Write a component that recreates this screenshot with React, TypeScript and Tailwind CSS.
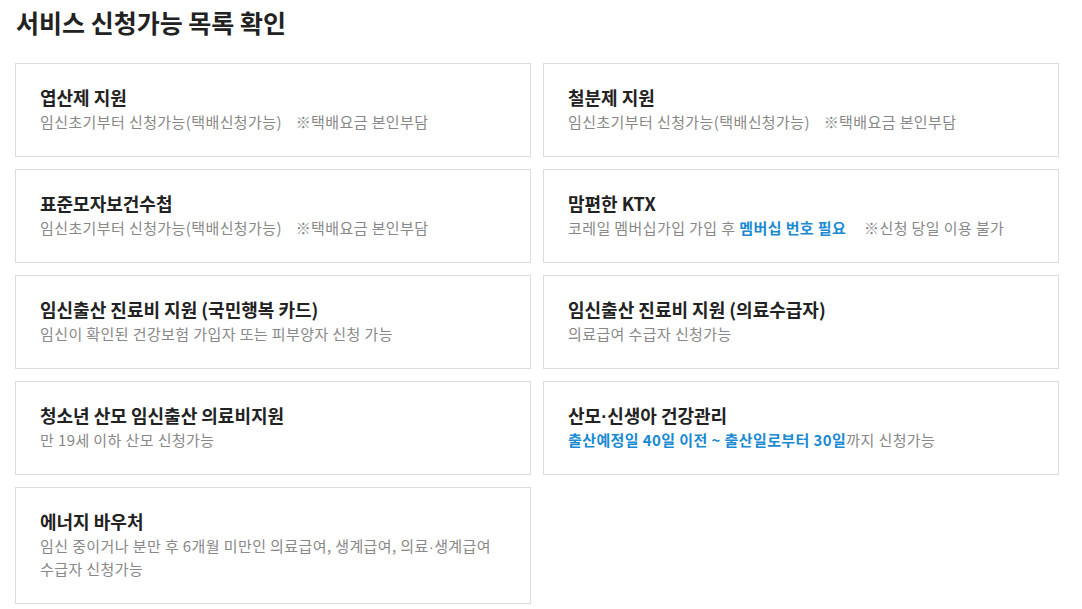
import React from "react";

type Item = {
  title: string;
  desc: React.ReactNode;
};

const B = ({ children }: { children: React.ReactNode }) => (
  <strong className="font-bold text-[#1a8ad4]">{children}</strong>
);

// narrow middle dot (CJK font draws it full width)
const Dot = () => (
  <span className="font-['Liberation_Sans'] leading-none">·</span>
);

const gap = <span className="inline-block w-[10px]" />;
const gapWide = <span className="inline-block w-[14px]" />;

const items: Item[] = [
  {
    title: "엽산제 지원",
    desc: (
      <>
        임신초기부터 신청가능(택배신청가능){gap} ※택배요금 본인부담
      </>
    ),
  },
  {
    title: "철분제 지원",
    desc: (
      <>
        임신초기부터 신청가능(택배신청가능){gap} ※택배요금 본인부담
      </>
    ),
  },
  {
    title: "표준모자보건수첩",
    desc: (
      <>
        임신초기부터 신청가능(택배신청가능){gap} ※택배요금 본인부담
      </>
    ),
  },
  {
    title: "맘편한 KTX",
    desc: (
      <>
        코레일 멤버십가입 가입 후 <B>멤버십 번호 필요</B>
        {gapWide} ※신청 당일 이용 불가
      </>
    ),
  },
  {
    title: "임신출산 진료비 지원 (국민행복 카드)",
    desc: "임신이 확인된 건강보험 가입자 또는 피부양자 신청 가능",
  },
  {
    title: "임신출산 진료비 지원 (의료수급자)",
    desc: "의료급여 수급자 신청가능",
  },
  {
    title: "청소년 산모 임신출산 의료비지원",
    desc: "만 19세 이하 산모 신청가능",
  },
  {
    title: "산모·신생아 건강관리",
    desc: (
      <>
        <B>출산예정일 40일 이전 ~ 출산일로부터 30일</B>까지 신청가능
      </>
    ),
  },
  {
    title: "에너지 바우처",
    desc: (
      <>
        임신 중이거나 분만 후 6개월 미만인 의료급여, 생계급여, 의료<Dot />생계급여
        <br />
        수급자 신청가능
      </>
    ),
  },
];

const ServiceCard: React.FC<Item> = ({ title, desc }) => {
  const parts = title.split("·");
  return (
    <div className="border border-[#dddddd] bg-white px-6 pt-[21px] pb-[23px]">
      <h3 className="text-[18px] leading-[25px] font-bold text-[#222222]">
        {parts.length > 1 ? (
          <>
            {parts[0]}
            <Dot />
            {parts[1]}
          </>
        ) : (
          title
        )}
      </h3>
      <p className="text-[15px] leading-[23px] text-[#888888] tracking-[0.4px]">
        {desc}
      </p>
    </div>
  );
};

export default function App() {
  return (
    <div
      className="bg-white min-h-[609px] pl-[15px] pr-[23px] pt-[5px]"
      style={{ fontFamily: '"Noto Sans CJK KR", "Noto Sans", sans-serif' }}
    >
      <h1 className="text-[25px] leading-[35px] font-bold text-[#222222] pl-px">
        서비스 신청가능 목록 확인
      </h1>
      <div className="mt-[23px] grid grid-cols-2 gap-x-3 gap-y-[12px] items-start">
        {items.map((it) => (
          <ServiceCard key={it.title} {...it} />
        ))}
      </div>
    </div>
  );
}
